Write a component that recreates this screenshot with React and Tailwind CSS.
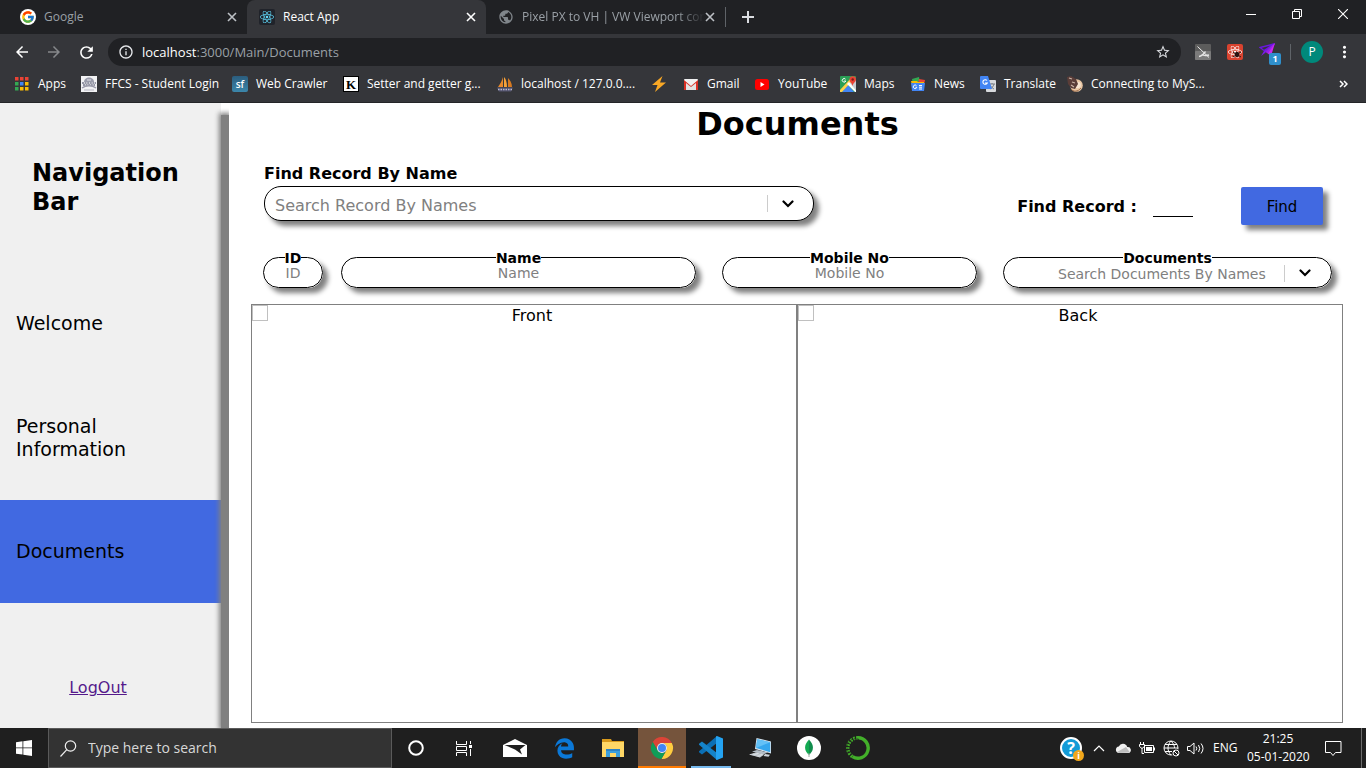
import React from "react";
import { FcGoogle } from "react-icons/fc";
import { FaReact, FaEdgeLegacy } from "react-icons/fa6";
import { MdArrowBack, MdArrowForward, MdRefresh, MdStarBorder, MdMoreVert, MdInfoOutline, MdPublic } from "react-icons/md";

const uiFont = "font-['Open_Sans','Noto_Sans',sans-serif]";
const pageFont = "font-['DejaVu_Sans',sans-serif]";

/* ---------- browser: tab strip ---------- */

function CloseIcon({ className }) {
  return (
    <svg viewBox="0 0 10 10" className={`size-2.5 ${className}`} fill="none" stroke="currentColor" strokeWidth="1.6">
      <path d="M1 1l8 8M9 1L1 9" />
    </svg>
  );
}

function Tab({ icon, title, active, fade }) {
  return (
    <div
      className={`flex h-[34px] w-[239px] min-w-0 items-center pl-3 pr-2.5 ${
        active ? "rounded-t-lg bg-[#35363a] text-white" : "text-[#9aa0a6]"
      }`}
    >
      <span className="flex size-4 shrink-0 items-center justify-center">{icon}</span>
      <span
        className={`ml-2 min-w-0 flex-1 text-[12px] leading-4 whitespace-nowrap ${
          fade ? "[mask-image:linear-gradient(to_right,black_85%,transparent)]" : ""
        }`}
      >
        {title}
      </span>
      <button aria-label={`Close ${title}`} className="flex size-2.5 shrink-0 items-center">
        <CloseIcon className={active ? "text-white" : "text-[#bdc1c6]"} />
      </button>
    </div>
  );
}

function TabStrip() {
  return (
    <div className="flex h-[34px] bg-[#202124]">
      <div className="flex min-w-0 flex-1 items-center pl-2">
        <Tab
          title="Google"
          icon={
            <span className="flex size-4 items-center justify-center rounded-full bg-white">
              <FcGoogle className="size-3.5" />
            </span>
          }
        />
        <Tab
          title="React App"
          active
          icon={
            <span className="flex size-4 items-center justify-center rounded-xs bg-[#20232a]">
              <FaReact className="size-3.5 text-[#61dafb]" />
            </span>
          }
        />
        <Tab title="Pixel PX to VH | VW Viewport con" fade icon={<MdPublic className="size-[18px] text-[#80868b]" />} />
        <span className="h-5 w-px bg-[#5f6368]" />
        <button aria-label="New tab" className="ml-4 flex size-3 items-center justify-center text-[#dadce0]">
          <svg viewBox="0 0 12 12" className="size-3" fill="none" stroke="currentColor" strokeWidth="2">
            <path d="M6 0v12M0 6h12" />
          </svg>
        </button>
      </div>
      <div className="flex h-7 text-white">
        <button aria-label="Minimize" className="flex w-[46px] items-center justify-center">
          <svg viewBox="0 0 10 10" className="size-2.5" stroke="currentColor"><path d="M0 5.5h10" /></svg>
        </button>
        <button aria-label="Restore" className="flex w-[46px] items-center justify-center">
          <svg viewBox="0 0 10 10" className="size-2.5" stroke="currentColor" fill="none">
            <path d="M.5 2.5h7v7h-7zM2.5 2.5v-2h7v7h-2" />
          </svg>
        </button>
        <button aria-label="Close window" className="flex w-[46px] items-center justify-center">
          <svg viewBox="0 0 10 10" className="size-2.5" stroke="currentColor" strokeWidth="1.1"><path d="M0 0l10 10M10 0L0 10" /></svg>
        </button>
      </div>
    </div>
  );
}

/* ---------- browser: toolbar ---------- */

function RapierIcon() {
  return (
    <svg viewBox="0 0 16 16" className="size-4">
      <rect width="16" height="16" rx="1" fill="#5c5c5c" />
      <rect y="7" width="16" height="9" rx="1" fill="#7b7b7b" />
      <path d="M2.500 2.500L14 13.500" stroke="#f1f1f1" strokeWidth="1" fill="none" />
      <path d="M4 12.500c3-.5 5-3 6.500-5M8 11c2 1 4 .5 6 0" stroke="#e4e4e4" strokeWidth="1.300" fill="none" />
    </svg>
  );
}

function ReactBugIcon() {
  return (
    <span className="relative flex size-4 items-center justify-center rounded-xs bg-[#d9432f]">
      <FaReact className="size-3.5 text-white" />
      <svg viewBox="0 0 8 8" className="absolute right-0.5 bottom-0.5 size-2">
        <ellipse cx="4" cy="4.5" rx="2.2" ry="2.8" fill="#2b1512" />
        <path d="M0 2l8 5M0 7l8-5" stroke="#2b1512" />
      </svg>
    </span>
  );
}

function PaperPlaneIcon() {
  return (
    <span className="relative block h-[22px] w-[22px]">
      <svg viewBox="0 0 17 15" className="h-[15px] w-[17px]">
        <path d="M15.500 .8L1 4.500 5 7.500z" fill="none" stroke="#6a17e0" strokeWidth="1.400" />
        <path d="M16 0L5 8 2 13l4-3z" fill="#7a1be8" />
        <path d="M16 0L7 9l5 4z" fill="#d026ee" />
        <path d="M16 0L7 9l2 1.500z" fill="#9420f0" />
      </svg>
      <span className="absolute right-0 bottom-0 flex h-3 w-3 items-center justify-center rounded-xs bg-[#2f8fcb] text-[9px] leading-3 font-bold text-white">
        1
      </span>
    </span>
  );
}

function Toolbar() {
  return (
    <div className="flex h-9 items-center bg-[#35363a] text-white">
      <div className="flex gap-3.5 pl-[13px]">
        <button aria-label="Back"><MdArrowBack className="size-[18px]" /></button>
        <button aria-label="Forward"><MdArrowForward className="size-[18px] text-[#86888b]" /></button>
        <button aria-label="Reload"><MdRefresh className="size-[19px]" /></button>
      </div>
      <div className="ml-[12px] flex h-7 flex-1 items-center rounded-full bg-[#202124] pr-2.5 pl-2.5 text-[13px] leading-5">
        <MdInfoOutline className="size-4 shrink-0 text-[#e8eaed]" />
        <label htmlFor="address" className="ml-2">localhost</label>
        <input
          id="address"
          type="text"
          defaultValue=":3000/Main/Documents"
          className="min-w-0 flex-1 bg-transparent text-[#9aa0a6] outline-none"
        />
        <button aria-label="Bookmark this page"><MdStarBorder className="size-4 text-[#dadce0]" /></button>
      </div>
      <div className="flex items-center pl-3.5">
        <button aria-label="Rapier extension"><RapierIcon /></button>
        <button aria-label="React developer tools" className="ml-4"><ReactBugIcon /></button>
        <button aria-label="Paper plane extension" className="ml-4 pt-1"><PaperPlaneIcon /></button>
        <span className="ml-[9px] h-4 w-px bg-[#5f6368]" />
        <button className="ml-2.5 size-[22px] rounded-full bg-[#00897b] text-[12px] leading-[22px]">P</button>
        <button aria-label="Menu" className="mr-3 ml-3 flex w-[19px] justify-center"><MdMoreVert className="size-5" /></button>
      </div>
    </div>
  );
}

/* ---------- browser: bookmark icons ---------- */

function AppsIcon() {
  const colors = ["#ea4335", "#ea4335", "#ea4335", "#34a853", "#4285f4", "#fbbc05", "#34a853", "#fbbc05", "#fbbc05"];
  return (
    <svg viewBox="0 0 16 16" className="size-4">
      {colors.map((c, i) => (
        <rect key={i} x={1 + (i % 3) * 5} y={1 + Math.floor(i / 3) * 5} width="3.500" height="3.500" fill={c} />
      ))}
    </svg>
  );
}

function CampusIcon() {
  return (
    <svg viewBox="0 0 16 16" className="size-4">
      <rect width="16" height="16" fill="#f2f2f4" />
      <path d="M3 6c0-6 10-6 10 0z" fill="#9a9cab" />
      <path d="M1 7h14M2 9h12" stroke="#77798c" strokeWidth="1.300" strokeDasharray="2 .6" />
      <path d="M1 12c4-3 10-3 14 0" stroke="#9b9bab" fill="none" strokeWidth="1.500" />
      <path d="M3 14h10" stroke="#b7b7c3" />
      <path d="M6 4h4" stroke="#e4e4ea" />
    </svg>
  );
}

function SfIcon() {
  return (
    <span className="flex size-4 items-center justify-center rounded-xs bg-linear-to-b from-[#2b5d7e] to-[#3c87ab] text-[10px] leading-4 font-semibold text-white">
      sf
    </span>
  );
}

function KIcon() {
  return (
    <span className="flex size-4 items-center justify-center border border-black bg-white font-['Liberation_Serif',serif] text-[13px] leading-none font-bold text-black">
      K
    </span>
  );
}

function SailIcon() {
  return (
    <svg viewBox="0 0 16 16" className="size-4">
      <path d="M6 1C5 5 3 8 1 11h5z" fill="#e8892b" />
      <path d="M7 1v10h3C10 7 9 3 7 1z" fill="#f6a23a" />
      <path d="M11 2v9h4C15 7 13 4 11 2z" fill="#d87a20" />
      <path d="M0 11.500h16l-2 4H2z" fill="#54546f" />
      <path d="M1 13.500h14" stroke="#b9b9cf" strokeWidth="1.500" strokeDasharray="1.500 1" />
    </svg>
  );
}

function BoltIcon() {
  return (
    <svg viewBox="0 0 16 16" className="size-4">
      <path d="M11.500 0L1 9h5.500L4 16 15 6.500H9z" fill="#f9a825" />
    </svg>
  );
}

function GmailIcon() {
  return (
    <svg viewBox="0 0 16 16" className="size-4">
      <rect x="1" y="3" width="14" height="11" rx="1" fill="#f1f1f1" />
      <path d="M3 14V6l5 4 5-4v8z" fill="#e3e3e3" />
      <path d="M1 14V4l7 6 7-6v10h-2V7l-5 4-5-4v7z" fill="#d93025" />
    </svg>
  );
}

function YouTubeIcon() {
  return (
    <svg viewBox="0 0 16 16" className="size-4">
      <rect x="1" y="3" width="14" height="11" rx="2.500" fill="#f00" />
      <path d="M6.500 6v5l4-2.500z" fill="#fff" />
    </svg>
  );
}

function MapsIcon() {
  return (
    <svg viewBox="0 0 16 16" className="size-4">
      <rect width="16" height="16" rx="1" fill="#2a9f55" />
      <path d="M9 7l7 7V3z" fill="#c9ccd1" />
      <path d="M2 16l6-7 6 7z" fill="#4285f4" />
      <path d="M0 14L11 2l2 2L2 16H0z" fill="#fdd04b" />
      <path d="M7 8l8 8h1v-2L9 6z" fill="#fff" />
      <path d="M12.500 10C12 7 9.500 6 9.500 3.500a3 3 0 016.500 0C16 6 13 7 12.500 10z" fill="#ea4335" />
      <circle cx="12.700" cy="3.500" r="1.200" fill="#7e1d17" />
      <path d="M5.500 3.200A1.800 1.800 0 105.800 5H4.200" stroke="#fff" fill="none" />
    </svg>
  );
}

function NewsIcon() {
  return (
    <svg viewBox="0 0 16 16" className="size-4">
      <path d="M2 3l7-2 1 7H3z" fill="#34a853" />
      <path d="M9 3l6 1-1 5H8z" fill="#ea4335" />
      <path d="M1 5h6l1 1h6v4H2z" fill="#fbbc05" />
      <path d="M1 7h14l-1 8H2z" fill="#4285f4" />
      <path d="M6.500 9.700a1.800 1.800 0 10.300 1.600H5.500M9 9.500h3M9 11.200h3M9 13h3" stroke="#fff" fill="none" />
    </svg>
  );
}

function TranslateIcon() {
  return (
    <svg viewBox="0 0 16 16" className="size-4">
      <rect x="6" y="4" width="10" height="12" rx="1" fill="#d7d9dc" />
      <path d="M9 8h6M12 7v1M14 8c-1 3-2 4-4 5M10.500 9.500c1 2 2 2.500 3.500 3.500" stroke="#70757a" fill="none" strokeWidth=".9" />
      <path d="M1 0h7l4 13H1a1 1 0 01-1-1V1a1 1 0 011-1z" fill="#4285f4" />
      <path d="M7 4.500A2.300 2.300 0 107.300 7H5" stroke="#fff" fill="none" strokeWidth="1.100" />
    </svg>
  );
}

function ShellIcon() {
  return (
    <svg viewBox="0 0 16 16" className="size-4">
      <circle cx="9.500" cy="9.500" r="6.300" fill="#e9c7a4" />
      <circle cx="10.500" cy="9" r="3.300" fill="#f6e3cf" />
      <path d="M0 1l4-1 5 3 2 5-3 5-4-1-3-4z" fill="#5a3d38" />
      <path d="M2 2l3 1M5 6l3 1M4 9l3 2" stroke="#c9b3a6" strokeWidth="1.200" />
      <path d="M4 13c2 3 7 3 10-1" stroke="#9b6c4b" fill="none" />
    </svg>
  );
}

const bookmarks = [
  { label: "Apps", icon: <AppsIcon />, width: "w-[67px]" },
  { label: "FFCS - Student Login", icon: <CampusIcon />, width: "w-[151px]" },
  { label: "Web Crawler", icon: <SfIcon />, width: "w-[111px]" },
  { label: "Setter and getter g...", icon: <KIcon />, width: "w-[154px]" },
  { label: "localhost / 127.0.0....", icon: <SailIcon />, width: "w-[154px]" },
  { label: "", icon: <BoltIcon />, width: "w-8" },
  { label: "Gmail", icon: <GmailIcon />, width: "w-[71px]" },
  { label: "YouTube", icon: <YouTubeIcon />, width: "w-[86px]" },
  { label: "Maps", icon: <MapsIcon />, width: "w-[70px]" },
  { label: "News", icon: <NewsIcon />, width: "w-[70px]" },
  { label: "Translate", icon: <TranslateIcon />, width: "w-[87px]" },
  { label: "Connecting to MyS...", icon: <ShellIcon />, width: "w-[151px]" },
];

function BookmarksBar() {
  return (
    <nav className="flex h-[33px] items-center border-b border-[#242528] bg-[#35363a] pb-1 pl-3.5 text-[12px] leading-4 text-white">
      {bookmarks.map((b, i) => (
        <a key={i} href="#" aria-label={b.label || "Lightning"} className={`flex shrink-0 items-center gap-2 whitespace-nowrap ${b.width}`}>
          {b.icon}
          {b.label && <span>{b.label}</span>}
        </a>
      ))}
      <button aria-label="More bookmarks" className="mr-4.5 ml-auto">
        <svg viewBox="0 0 9 8" className="h-2 w-[9px]" fill="none" stroke="#fff" strokeWidth="1.500">
          <path d="M1 1l3 3-3 3M5 1l3 3-3 3" />
        </svg>
      </button>
    </nav>
  );
}

/* ---------- page ---------- */

function SideItem({ children, active }) {
  return (
    <a
      href="#"
      className={`flex h-[103px] items-center px-4 text-[19px] leading-[23px] ${active ? "bg-[#4169e1]" : ""}`}
    >
      {children}
    </a>
  );
}

function Sidebar() {
  return (
    <aside className="flex shrink-0 overflow-hidden">
      <div className="w-[221px] bg-[#f0f0f0] text-black">
        <h2 className="px-8 pt-14 text-[24px] leading-[29px] font-bold">Navigation Bar</h2>
        <nav className="mt-[55px] flex flex-col gap-[11px]">
          <SideItem>Welcome</SideItem>
          <SideItem>Personal Information</SideItem>
          <SideItem active>Documents</SideItem>
        </nav>
        <div className="mt-[75px] pr-[25px] text-center text-[16px] leading-5">
          <a href="#" className="text-[#551a8b] underline">LogOut</a>
        </div>
      </div>
      <div className="relative mt-3 w-2 bg-[#808080] shadow-[0_0_5px_2px_#808080]" />
    </aside>
  );
}

function Chevron() {
  return (
    <svg viewBox="0 0 12 8" className="h-2 w-3" fill="none" stroke="#000" strokeWidth="2.200" strokeLinecap="round">
      <path d="M1.500 1.500L6 6l4.500-4.500" />
    </svg>
  );
}

function Picker({ id, placeholder, className }) {
  return (
    <div className="grid flex-1 grid-cols-[1fr_44px] items-center">
      <select
        id={id}
        className={`col-span-2 col-start-1 row-start-1 w-full appearance-none bg-transparent text-[#808080] outline-none ${className}`}
      >
        <option>{placeholder}</option>
      </select>
      <span className="pointer-events-none col-start-2 row-start-1 flex h-[17px] items-center border-l border-[#ccc] pl-3.5">
        <Chevron />
      </span>
    </div>
  );
}

function Field({ id, label, grow, children }) {
  return (
    <fieldset
      className={`h-[38px] min-w-0 rounded-[16px] border border-black bg-white text-[14px] leading-4 shadow-[5px_5px_5px_#808080] ${grow}`}
    >
      <legend className="mx-auto h-3.5 font-bold">
        <label htmlFor={id}>{label}</label>
      </legend>
      {children}
    </fieldset>
  );
}

function TextField({ id, label, grow }) {
  return (
    <Field id={id} label={label} grow={grow}>
      <input id={id} type="text" placeholder={label} className="block h-[18px] w-full bg-transparent text-center outline-none placeholder:text-[#808080]" />
    </Field>
  );
}

function Preview({ title }) {
  return (
    <section className="flex flex-1 items-start border border-[#808080]">
      <span className="size-4 border border-[#c0c0c0]" />
      <h3 className="flex-1 text-center text-[16px] leading-[22px]">{title}</h3>
    </section>
  );
}

function DocumentsPage() {
  return (
    <main className="flex min-w-0 flex-1 flex-col bg-white text-black">
      <h1 className="text-center text-[32px] leading-[42px] font-bold">Documents</h1>
      <form className="mt-[18px] px-[34px]" onSubmit={(e) => e.preventDefault()}>
        <div className="flex items-end justify-between pr-[9px] pl-px">
          <div className="w-[550px]">
            <label htmlFor="record" className="block text-[16px] leading-[22px] font-bold">Find Record By Name</label>
            <div className="mt-px flex h-[35px] rounded-[17px] border border-black bg-white pr-0.5 shadow-[5px_5px_5px_#808080]">
              <Picker id="record" placeholder="Search Record By Names" className="pt-1 pl-2.5 text-[16px] leading-5" />
            </div>
          </div>
          <div className="-mb-1 flex items-center text-[16px] leading-5">
            <label htmlFor="find" className="pt-0.5 font-bold">Find Record :</label>
            <input id="find" type="text" className="ml-4 h-[22px] w-10 border-b border-black bg-transparent outline-none" />
            <button className="ml-12 h-[38px] w-[82px] rounded-xs bg-[#4169e1] pt-0.5 text-[15px] shadow-[5px_5px_5px_#808080]">Find</button>
          </div>
        </div>
        <div className="mt-[29px] flex gap-[26px]">
          <div className="flex min-w-0 flex-[433_1_0%] gap-[18px]">
            <TextField id="rec-id" label="ID" grow="w-[60px] shrink-0" />
            <TextField id="rec-name" label="Name" grow="flex-1" />
          </div>
          <TextField id="rec-mobile" label="Mobile No" grow="flex-[253_1_0%]" />
          <Field id="rec-docs" label="Documents" grow="flex-[327_1_0%]">
            <div className="flex pr-[3px]">
              <Picker id="rec-docs" placeholder="Search Documents By Names" className="pt-0.5 pl-[54px] text-[14px] leading-4" />
            </div>
          </Field>
        </div>
      </form>
      <div className="mt-4 mb-[5px] flex flex-1 pr-[23px] pl-[22px]">
        <Preview title="Front" />
        <Preview title="Back" />
      </div>
    </main>
  );
}

/* ---------- taskbar ---------- */

function ChromeIcon() {
  return (
    <svg viewBox="0 0 24 24" className="size-6">
      <path d="M12 7H21.800A11 11 0 0 0 2.770 6.010L7.670 14.500A5 5 0 0 1 12 7Z" fill="#db4437" />
      <path d="M12 7H21.800A11 11 0 0 1 11.430 23L16.330 14.500A5 5 0 0 0 12 7Z" fill="#ffcd40" />
      <path d="M2.770 6.010L7.670 14.500A5 5 0 0 0 16.330 14.500L11.430 23A11 11 0 0 1 2.770 6.010Z" fill="#0f9d58" />
      <circle cx="12" cy="12" r="5" fill="#f1f1f1" />
      <circle cx="12" cy="12" r="4" fill="#4285f4" />
    </svg>
  );
}

function CodeIcon() {
  return (
    <svg viewBox="0 0 24 24" className="size-6">
      <path d="M18 0v7L3 18.500l-3-2.300v-1z" fill="#0b6fb5" />
      <path d="M18 24v-7L3 5.500l-3 2.300v1z" fill="#1583c9" />
      <path d="M18 0l6 2.500v19L18 24l-1-.5V.5z" fill="#24a3f2" />
    </svg>
  );
}

function MailIcon() {
  return (
    <svg viewBox="0 0 24 20" className="h-5 w-6">
      <path d="M0 7L12 1l12 6v12H0z" fill="#fff" />
      <path d="M1.500 7h21L17 11.500l2 5-7-5z" fill="#1f1f1f" />
    </svg>
  );
}

function FolderIcon() {
  return (
    <svg viewBox="0 0 22 18" className="h-[18px] w-[22px]">
      <path d="M0 0h9l1 2h12v6H0z" fill="#d99a1c" />
      <path d="M0 3h22v15H0z" fill="#ffd766" />
      <path d="M4 18v-8h14v8h-4v-4H8v4z" fill="#3c9fdc" />
      <path d="M4 10h14v2H4z" fill="#2c82c4" />
    </svg>
  );
}

function ComputersIcon() {
  return (
    <svg viewBox="0 0 24 22" className="h-[22px] w-6">
      <path d="M8.500 1L23 4.500v12L7 12z" fill="#d8e4ee" />
      <path d="M9.300 2.200l12.900 3v10L8 11z" fill="#35a7ee" />
      <path d="M9.300 2.200l12.900 3L8 11z" fill="#63c1f7" />
      <path d="M4 14.500l5-1.500 11 2.500-5 2z" fill="#b4bec7" />
      <path d="M1 17.500l7-2 8 2-4 3z" fill="#e3e8ec" />
      <path d="M3 17.500l10 2M6 16.500l9 2" stroke="#a4aeb7" strokeWidth=".6" />
      <path d="M17 17l5 .8-1.500 2-5-.8z" fill="#cfd6dc" />
    </svg>
  );
}

function LeafIcon() {
  return (
    <svg viewBox="0 0 24 24" className="size-6">
      <circle cx="12" cy="12" r="12" fill="#fff" />
      <path d="M12 3.500c5.500 6 5 11 0 15.500z" fill="#118d4d" />
      <path d="M12 3.500C6.500 9.500 7 14.500 12 19z" fill="#13aa52" />
      <path d="M12 17v4" stroke="#9aa8a0" />
    </svg>
  );
}

function RingIcon() {
  return (
    <svg viewBox="0 0 24 24" className="size-6" fill="none" stroke="#43b02a">
      <path d="M12 1.800A10.200 10.200 0 1 1 6.500 20.600" strokeWidth="3.400" />
      <path d="M12 1.800A10.200 10.200 0 0 0 6.500 20.600" strokeWidth="3.400" strokeDasharray="1.800 1.200" />
      <path d="M13 3.500A8.500 8.500 0 0 0 6 19" stroke="#1f1f1f" strokeWidth=".8" strokeDasharray="2 1" />
    </svg>
  );
}

function TaskViewIcon() {
  return (
    <svg viewBox="0 0 17 15" className="h-[15px] w-[17px]" fill="none" stroke="#fff">
      <path d="M.5 0v3.500h10V0M.5 15v-3.500h10V15M.5 5.500h10v4H.5zM14.500 0v3M14.500 8v7" />
      <path d="M13 4h3v3h-3z" fill="#fff" stroke="none" />
    </svg>
  );
}

const tasks = [
  { label: "Mail", icon: <MailIcon /> },
  { label: "Edge", icon: <FaEdgeLegacy className="size-[21px] text-[#0b78d7]" /> },
  { label: "File Explorer", icon: <FolderIcon /> },
  { label: "Chrome", icon: <ChromeIcon />, state: "bg-[#75543c] shadow-[inset_0_-2px_0_#ff7a00]" },
  { label: "Visual Studio Code", icon: <CodeIcon />, state: "running" },
  { label: "Remote computers", icon: <ComputersIcon /> },
  { label: "MongoDB Compass", icon: <LeafIcon /> },
  { label: "Anaconda", icon: <RingIcon /> },
];

function TaskButton({ label, icon, state }) {
  return (
    <button
      aria-label={label}
      className={`relative flex h-full w-12 items-center justify-center ${state && state !== "running" ? state : ""}`}
    >
      {icon}
      {state === "running" && <span className="absolute inset-x-1 bottom-0 h-0.5 bg-[#76b9ed]" />}
    </button>
  );
}

function HelpIcon() {
  return (
    <span className="relative flex size-[22px] items-center justify-center rounded-full border-2 border-white bg-[#139bd7] text-[16px] leading-none font-bold text-white">
      ?
      <span className="absolute -right-1 -bottom-1 flex size-[11px] items-center justify-center rounded-full bg-[#f2a71b] text-[9px] leading-none">
        i
      </span>
    </span>
  );
}

function Tray() {
  return (
    <div className="ml-auto flex h-full items-center text-[12px] leading-[18px] text-white">
      <button aria-label="Help"><HelpIcon /></button>
      <button aria-label="Show hidden icons" className="ml-[11px]">
        <svg viewBox="0 0 12 8" className="h-2 w-3" fill="none" stroke="#fff" strokeWidth="1.200"><path d="M1 7l5-5 5 5" /></svg>
      </button>
      <svg viewBox="0 0 17 12" className="ml-2.5 h-3 w-[17px]">
        <path d="M3.500 11a3.300 3.300 0 01.3-6.500 4.500 4.500 0 018.400.5 3.100 3.100 0 011.500 6z" fill="#f1f1f1" />
        <path d="M2 10l9-5 4 5.500-11 .5z" fill="#bdbdbd" />
      </svg>
      <svg viewBox="0 0 17 13" className="ml-[7px] h-[13px] w-[17px]" fill="none" stroke="#fff">
        <path d="M5.500 3.500h9v7h-9zM15.500 5.500v3" />
        <path d="M7 5h6v4H7z" fill="#fff" stroke="none" />
        <path d="M1.500 0v2M4.500 0v2M.5 2.500h5v2L3 6.500.5 4.500zM3 6v5.500h2" />
      </svg>
      <svg viewBox="0 0 17 17" className="ml-[7px] size-[17px]" fill="none" stroke="#fff">
        <circle cx="8" cy="8" r="7" />
        <path d="M8 1C4 5 4 11 8 15M8 1c3 3 3.500 5 3.500 7M1 8h14M2 4.500h12M2 11.500h7" />
        <circle cx="13" cy="13" r="4" fill="#1f1f1f" stroke="none" />
        <circle cx="13" cy="13" r="3" />
        <path d="M11 11l4 4" />
      </svg>
      <svg viewBox="0 0 17 13" className="ml-[7px] h-[13px] w-[17px]" fill="none" stroke="#fff">
        <path d="M.5 4.500H3l4-3.500v11L3 8.500H.5zM9 4.500q1.500 2 0 4M11.500 3q2.500 3.500 0 7M14 1.500q4 5 0 10" />
      </svg>
      <span className="ml-[9px] w-[26px]">ENG</span>
      <time className="ml-2 w-[62px] text-center whitespace-nowrap">
        21:25
        <br />
        05-01-2020
      </time>
      <button aria-label="Notifications" className="ml-4 flex h-full w-[37px] items-center border-r border-[#6b6b6b]">
        <svg viewBox="0 0 17 17" className="size-[17px]" fill="none" stroke="#fff">
          <path d="M.5 1.500h15.500v11h-5.500L8 15.500 5.500 12.500H.5z" />
        </svg>
      </button>
      <span className="w-1" />
    </div>
  );
}

function Taskbar() {
  return (
    <footer className="flex h-10 shrink-0 items-center bg-[#1f1f1f]">
      <button aria-label="Start" className="flex h-full w-12 items-center justify-center">
        <svg viewBox="0 0 16 16" className="size-4" fill="#fff">
          <path d="M0 2.200L6.500 1.300v6.200H0zM7.300 1.200L16 0v7.500H7.300zM0 8.300h6.500v6.300L0 13.700zM7.300 8.300H16V16l-8.700-1.300z" />
        </svg>
      </button>
      <div className="flex h-10 w-[344px] items-center border border-[#5a5a5a] bg-[#333]">
        <svg viewBox="0 0 17 17" className="ml-[11px] size-[17px]" fill="none" stroke="#f1f1f1" strokeWidth="1.200">
          <circle cx="10.500" cy="6" r="5.200" />
          <path d="M6.800 9.700L.5 16.500" />
        </svg>
        <input
          type="text"
          aria-label="Search"
          placeholder="Type here to search"
          className="ml-[11px] min-w-0 flex-1 bg-transparent text-[14px] leading-5 text-[#d8d8d8] outline-none placeholder:text-[#d8d8d8]"
        />
      </div>
      <TaskButton
        label="Cortana"
        icon={<svg viewBox="0 0 16 16" className="size-4" fill="none" stroke="#fff" strokeWidth="2"><circle cx="8" cy="8" r="6.800" /></svg>}
      />
      <TaskButton label="Task view" icon={<TaskViewIcon />} />
      <div className="ml-[3px] flex h-full gap-px">
        {tasks.map((t) => (
          <TaskButton key={t.label} {...t} />
        ))}
      </div>
      <Tray />
    </footer>
  );
}

export default function App() {
  return (
    <div className={`flex min-h-screen flex-col overflow-hidden ${uiFont}`}>
      <header>
        <TabStrip />
        <Toolbar />
        <BookmarksBar />
      </header>
      <div className={`flex flex-1 bg-white ${pageFont}`}>
        <Sidebar />
        <DocumentsPage />
      </div>
      <Taskbar />
    </div>
  );
}
